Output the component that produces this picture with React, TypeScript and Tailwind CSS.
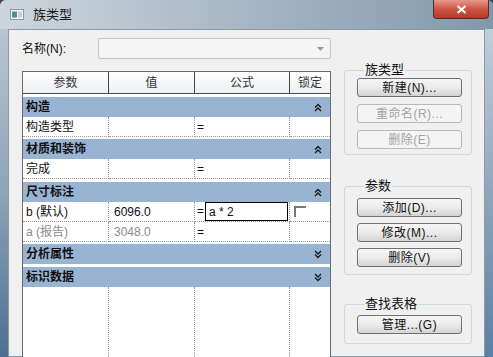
import React from "react";

const font = "font-['Liberation_Sans','Noto_Sans_CJK_SC',sans-serif]";

function Chevrons({ up }: { up: boolean }) {
  return (
    <svg width="8" height="9" viewBox="0 0 8 9">
      <path
        d={up ? "M1 4.5 L4 1.5 L7 4.5 M1 8 L4 5 L7 8" : "M1 1 L4 4 L7 1 M1 4.5 L4 7.5 L7 4.5"}
        stroke="#1a1a1a"
        strokeWidth="1.4"
        fill="none"
      />
    </svg>
  );
}

function Section({ title, up, className = "" }: { title: string; up: boolean; className?: string }) {
  return (
    <div className={`flex h-[20px] items-center justify-between bg-[#99b4d3] pl-[3px] pr-[8px] ${className}`}>
      <span className="text-[12px] font-bold text-[#111]">{title}</span>
      <Chevrons up={up} />
    </div>
  );
}

function Row({
  name,
  value = "",
  muted = false,
  formula,
  lock,
}: {
  name: string;
  value?: string;
  muted?: boolean;
  formula?: React.ReactNode;
  lock?: React.ReactNode;
}) {
  const cell = "h-[20px] border-b border-dotted border-[#9a9a9a] flex items-center text-[12px]";
  const sep = "border-r border-dotted border-[#9a9a9a]";
  const tone = muted ? "text-[#8c8c8c]" : "text-[#111]";
  return (
    <div className="grid grid-cols-[86px_86px_95px_40px] bg-white">
      <div className={`${cell} ${sep} ${tone} pl-[3px]`}>{name}</div>
      <div className={`${cell} ${sep} ${tone} pl-[5px]`}>{value}</div>
      <div className={`${cell} ${sep} pl-[2px]`}>{formula ?? <span className="text-[#111]">=</span>}</div>
      <div className={`${cell}`}>{lock}</div>
    </div>
  );
}

function Btn({ children, disabled = false }: { children: React.ReactNode; disabled?: boolean }) {
  return (
    <div
      className={
        disabled
          ? "flex h-[19px] w-[105px] items-center justify-center rounded-[3px] border border-[#b5babd] bg-[#f4f4f4] text-[12px] tracking-[0.5px] text-[#a3a3a3]"
          : "flex h-[19px] w-[105px] items-center justify-center rounded-[3px] border border-[#707070] bg-linear-to-b from-[#f6f6f6] via-[#ebebeb] to-[#d4d4d4] text-[12px] tracking-[0.5px] text-[#111]"
      }
    >
      {children}
    </div>
  );
}

function Group({
  title,
  className = "",
  children,
}: {
  title: string;
  className?: string;
  children: React.ReactNode;
}) {
  return (
    <fieldset className={`w-[128px] rounded-[3px] border border-[#d2d8dd] pl-[12px] ${className}`}>
      <legend className="ml-[7px] px-[1px] text-[13px] leading-[16px] text-[#111]">{title}</legend>
      <div className="flex flex-col">{children}</div>
    </fieldset>
  );
}

export default function App() {
  return (
    <div className={`h-[357px] w-[493px] overflow-hidden bg-[#34475a] ${font}`}>
      <div className="flex h-full flex-col rounded-t-[6px] bg-[#a9b8c6]">
        {/* title bar */}
        <div className="flex h-[29px] shrink-0 rounded-t-[6px] bg-linear-to-r from-[#cdd6dd] via-[#a7b6c4] to-[#8199ad]">
          <div className="flex items-center">
            <svg width="14" height="11" viewBox="0 0 14 11" className="ml-[10px]">
              <rect x="0.5" y="0.5" width="13" height="10" fill="#f2f4f5" stroke="#8d979f" />
              <rect x="2" y="2.5" width="5" height="6" fill="#4f8f86" />
              <rect x="8" y="2.5" width="4" height="6" fill="#c9ced2" />
            </svg>
            <span className="ml-[9px] text-[13px] text-[#1b1b1b]">族类型</span>
          </div>
          <div className="ml-auto mr-[4px] flex h-[19px] w-[56px] items-center justify-center rounded-b-[4px] border border-t-0 border-[#5c2a24] bg-linear-to-b from-[#e59a8c] via-[#cc5345] to-[#b23a2d]">
            <svg width="11" height="9" viewBox="0 0 11 9">
              <path d="M1.5 1 L9.5 8 M9.5 1 L1.5 8" stroke="#fff" strokeWidth="2.2" />
            </svg>
          </div>
        </div>

        {/* body */}
        <div className="flex min-h-0 flex-1">
          <div className="w-[8px] bg-linear-to-b from-[#b9c5cf] via-[#8ea3b6] to-[#4f6f8f]" />
          <div className="flex-1 border border-[#8a9aa9] bg-[#f0f0f0] pl-[13px] pt-[8px]">
            {/* name row */}
            <div className="flex h-[21px] items-center">
              <span className="w-[76px] text-[12px] text-[#111]">名称(N):</span>
              <div className="flex h-[21px] w-[233px] items-center justify-end rounded-[2px] border border-[#c4c7ca] bg-[#f5f5f5] pr-[6px]">
                <svg width="7" height="4" viewBox="0 0 7 4">
                  <path d="M0 0 L7 0 L3.5 4 Z" fill="#9a9a9a" />
                </svg>
              </div>
            </div>

            <div className="flex">
              {/* parameter table */}
              <div className="mt-[12px] h-[300px] w-[309px] border border-[#6a6a6a] bg-white">
                <div className="grid h-[22px] grid-cols-[86px_86px_95px_40px] border-b border-[#4a4a4a] bg-linear-to-b from-white to-[#eceff2] text-[12px] text-[#333]">
                  <div className="flex items-center justify-center border-r border-[#444]">参数</div>
                  <div className="flex items-center justify-center border-r border-[#444]">值</div>
                  <div className="flex items-center justify-center border-r border-[#444]">公式</div>
                  <div className="flex items-center justify-center">锁定</div>
                </div>
                <Section title="构造" up className="mt-[3px]" />
                <Row name="构造类型" />
                <Section title="材质和装饰" up className="mt-[2px]" />
                <Row name="完成" />
                <Section title="尺寸标注" up className="mt-[3px]" />
                <Row
                  name="b (默认)"
                  value="6096.0"
                  formula={
                    <div className="flex h-full w-full items-start">
                      <span className="text-[#111]">=</span>
                      <div className="ml-[1px] mr-[1px] flex h-[19px] flex-1 items-center border border-black pl-[3px] text-[#111]">
                        a * 2
                      </div>
                    </div>
                  }
                  lock={<span className="ml-[4px] h-[11px] w-[12px] border-l-2 border-t-2 border-[#777]" />}
                />
                <Row name="a (报告)" value="3048.0" muted />
                <Section title="分析属性" up={false} className="mt-[2px]" />
                <Section title="标识数据" up={false} className="mt-[3px]" />
                <div className="grid h-[80px] grid-cols-[86px_86px_95px_40px]">
                  <div className="border-r border-dotted border-[#9a9a9a]" />
                  <div className="border-r border-dotted border-[#9a9a9a]" />
                  <div className="border-r border-dotted border-[#9a9a9a]" />
                  <div />
                </div>
              </div>

              {/* right column */}
              <div className="ml-[13px] flex flex-col pt-[3px]">
                <Group title="族类型" className="pb-[5px]">
                  <div className="flex flex-col gap-[7px]">
                    <Btn>新建(N)...</Btn>
                    <Btn disabled>重命名(R)...</Btn>
                    <Btn disabled>删除(E)</Btn>
                  </div>
                </Group>
                <Group title="参数" className="mt-[23px] pb-[7px] pt-[4px]">
                  <div className="flex flex-col gap-[6px]">
                    <Btn>添加(D)...</Btn>
                    <Btn>修改(M)...</Btn>
                    <Btn>删除(V)</Btn>
                  </div>
                </Group>
                <Group title="查找表格" className="mt-[21px] pb-[9px] pt-[3px]">
                  <Btn>管理...(G)</Btn>
                </Group>
              </div>
            </div>
          </div>
          <div className="w-[8px] bg-linear-to-b from-[#c3ced8] via-[#8fa6ba] to-[#5a80a6]" />
        </div>
      </div>
    </div>
  );
}
